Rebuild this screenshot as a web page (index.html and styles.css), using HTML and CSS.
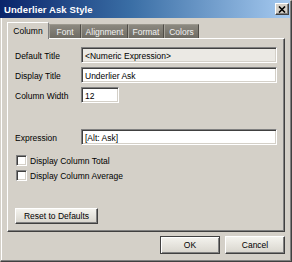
FILE: index.html
```html
<!DOCTYPE html>
<html>
<head>
  <meta charset="utf-8">
  <title>Underlier Ask Style</title>
  <link rel="stylesheet" href="styles.css">
</head>
<body>
  <div class="window">
    <div class="titlebar">
      <span class="title">Underlier Ask Style</span>
      <div class="close-btn">
        <svg width="8" height="7" viewBox="0 0 8 7">
          <path d="M1 0.5 L7 6.5 M7 0.5 L1 6.5" stroke="#000" stroke-width="1.6" fill="none"/>
        </svg>
      </div>
    </div>

    <!-- tab strip -->
    <div class="tabs">
      <div class="tab active tab-column">Column</div>
      <div class="tab tab-font">Font</div>
      <div class="tab tab-align">Alignment</div>
      <div class="tab tab-format">Format</div>
      <div class="tab tab-colors">Colors</div>
    </div>

    <div class="panel">
      <div class="form-grid">
        <label>Default Title</label>
        <div class="field disabled">&lt;Numeric Expression&gt;</div>
        <label>Display Title</label>
        <div class="field">Underlier Ask</div>
        <label>Column Width</label>
        <div class="field short">12</div>
      </div>

      <div class="form-grid expression-row">
        <label>Expression</label>
        <div class="field">[Alt: Ask]</div>
      </div>

      <div class="check-row first">
        <span class="checkbox"></span>
        <span>Display Column Total</span>
      </div>
      <div class="check-row">
        <span class="checkbox"></span>
        <span>Display Column Average</span>
      </div>

      <div class="btn reset-btn">Reset to Defaults</div>
    </div>

    <div class="actions">
      <div class="btn default">OK</div>
      <div class="btn">Cancel</div>
    </div>
  </div>
</body>
</html>
```

FILE: styles.css
```css
body {
  margin: 0;
  font-family: 'Liberation Sans', Arial, sans-serif;
  font-size: 8.5px;
  color: #000;
  background: #d4d0c8;
}

.window {
  width: 292px;
  height: 262px;
  box-sizing: border-box;
  background: #d4d0c8;
  border: 1px solid;
  border-color: #d4d0c8 #404040 #404040 #d4d0c8;
  box-shadow: inset -1px -1px #808080, inset 1px 1px #fff;
  padding: 0 1px 0 0;
}

.titlebar {
  height: 18px;
  margin-top: -1px;
  margin-left: -1px;
  display: flex;
  align-items: center;
  background: linear-gradient(to right, #0a246a, #3a6ea5 45%, #a6caf0);
  padding-left: 4px;
}

.title {
  color: #fff;
  font-weight: bold;
  font-size: 9.5px;
  letter-spacing: 0.1px;
}

.close-btn {
  margin-left: auto;
  margin-right: 1px;
  width: 14px;
  height: 12px;
  box-sizing: border-box;
  background: #d4d0c8;
  border: 1px solid;
  border-color: #fff #404040 #404040 #fff;
  box-shadow: inset -1px -1px #808080;
  display: flex;
  align-items: center;
  justify-content: center;
}

.close-btn svg {
  display: block;
}

.tabs {
  display: flex;
  align-items: flex-end;
  height: 16px;
  margin-top: 4px;
  margin-left: 6px;
}

.tab {
  height: 14px;
  box-sizing: border-box;
  display: flex;
  align-items: center;
  justify-content: center;
  color: #f2f2f2;
  background: linear-gradient(#8c8980, #6f6c64);
  border-left: 1px solid #a7a49b;
  border-right: 1px solid #4f4c46;
  border-top: 1px solid #9c998f;
}

.tab.active {
  height: 17px;
  margin-bottom: -1px;
  position: relative;
  color: #000;
  background: #d4d0c8;
  border-left: 1px solid #fff;
  border-top: 1px solid #fff;
  border-right: 1px solid #808080;
  padding-bottom: 1px;
}

.tab-column { width: 42px; }
.tab-font { width: 32px; }
.tab-align { width: 47px; }
.tab-format { width: 36px; }
.tab-colors { width: 35px; }

.panel {
  margin-left: 6px;
  width: 278px;
  height: 194px;
  box-sizing: border-box;
  border: 1px solid;
  border-color: #fff #404040 #404040 #fff;
  box-shadow: inset -1px -1px #808080;
  padding: 8px 7px 0 7px;
}

.form-grid {
  display: grid;
  grid-template-columns: 66px 1fr;
  row-gap: 4px;
  align-items: center;
}

.form-grid label {
  padding-top: 1px;
}

.field {
  height: 16px;
  box-sizing: border-box;
  background: #fff;
  border: 1px solid;
  border-color: #808080 #fff #fff #808080;
  box-shadow: inset 1px 1px #404040, inset -1px -1px #d4d0c8;
  padding: 1px 3px 0;
  display: flex;
  align-items: center;
  white-space: nowrap;
  overflow: hidden;
}

.field.disabled {
  background: #ebe9e4;
}

.field.short {
  width: 38px;
}

.expression-row {
  margin-top: 26px;
}

.check-row {
  display: flex;
  align-items: center;
  gap: 3px;
  height: 13px;
  margin-left: 1px;
  margin-top: 2px;
}

.check-row.first {
  margin-top: 9px;
}

.checkbox {
  width: 11px;
  height: 11px;
  box-sizing: border-box;
  background: #fff;
  border: 1px solid;
  border-color: #808080 #fff #fff #808080;
  box-shadow: inset 1px 1px #404040, inset -1px -1px #d4d0c8;
}

.btn {
  height: 18px;
  width: 60px;
  box-sizing: border-box;
  display: flex;
  align-items: center;
  justify-content: center;
  background: linear-gradient(#f4f3ee, #d8d5cd);
  border: 1px solid;
  border-color: #fff #404040 #404040 #fff;
  box-shadow: inset -1px -1px #808080;
}

.btn.default {
  border-color: #404040;
  box-shadow: inset 1px 1px #fff, inset -1px -1px #808080;
}

.reset-btn {
  width: 83px;
  height: 16px;
  margin-top: 26px;
}

.actions {
  display: flex;
  justify-content: flex-end;
  gap: 5px;
  margin-left: 6px;
  width: 278px;
  margin-top: 4px;
}
```
